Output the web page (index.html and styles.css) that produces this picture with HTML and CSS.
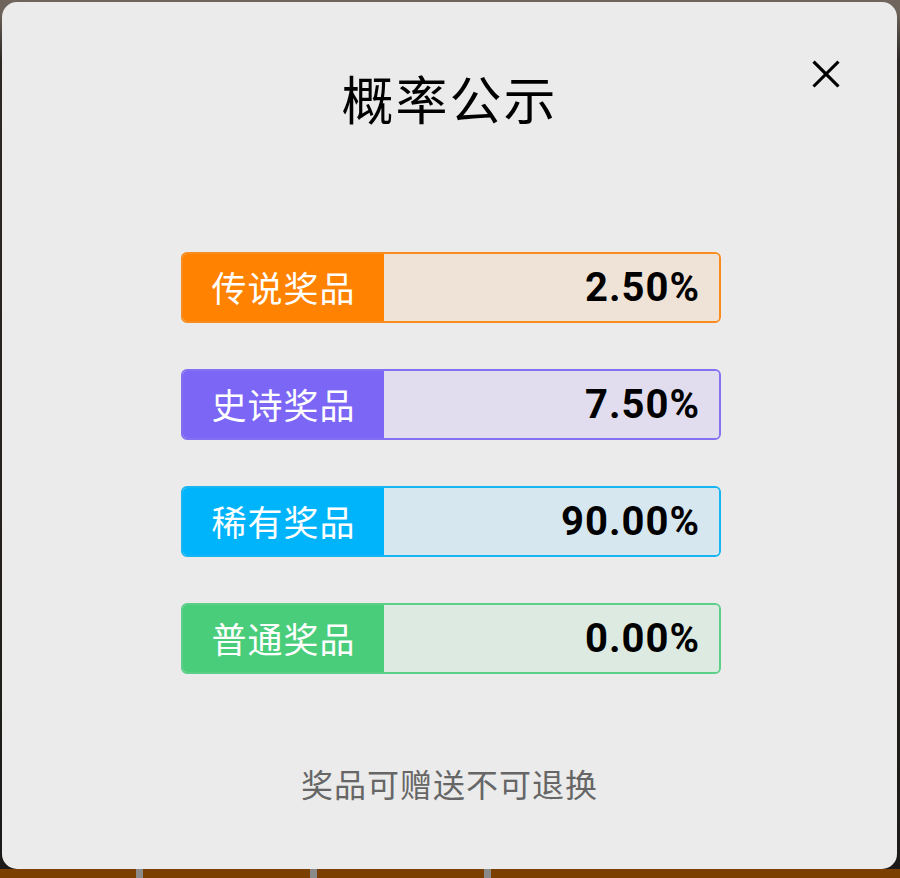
FILE: index.html
```html
<!DOCTYPE html>
<html lang="zh">
<head>
<meta charset="utf-8">
<title>概率公示</title>
<link rel="stylesheet" href="styles.css">
</head>
<body>
<div class="backdrop">
  <div class="dialog">
    <h1 class="title">概率公示</h1>
    <button class="close" aria-label="关闭">
      <svg viewBox="0 0 32 32" width="32" height="32"><path d="M3 3L29 29M29 3L3 29" stroke="#000" stroke-width="3.6" stroke-linecap="square" fill="none"/></svg>
    </button>
    <div class="list">
      <div class="row legend"><div class="label">传说奖品</div><div class="value">2.50%</div></div>
      <div class="row epic"><div class="label">史诗奖品</div><div class="value">7.50%</div></div>
      <div class="row rare"><div class="label">稀有奖品</div><div class="value">90.00%</div></div>
      <div class="row common"><div class="label">普通奖品</div><div class="value">0.00%</div></div>
    </div>
    <p class="note">奖品可赠送不可退换</p>
  </div>
  <div class="floor">
    <span class="post p1"></span><span class="post p2"></span><span class="post p3"></span>
  </div>
</div>
</body>
</html>
```
FILE: styles.css
```css
html, body {
  margin: 0;
  padding: 0;
}
body {
  width: 900px;
  height: 878px;
  overflow: hidden;
  background: #2a2622;
  font-family: "Noto Sans CJK SC", "Noto Sans", sans-serif;
}
.backdrop {
  position: relative;
  width: 900px;
  height: 878px;
  background: linear-gradient(#6f655c 0, #6f655c 10px, #2c2824 60px, #1c1a18 100%);
}
.dialog {
  position: absolute;
  left: 2px;
  top: 2px;
  width: 895px;
  height: 867px;
  background: #ebebeb;
  border-radius: 15px;
  box-sizing: border-box;
  padding-top: 63px;
  z-index: 2;
}
.floor {
  position: absolute;
  left: 0;
  right: 0;
  bottom: 0;
  height: 9px;
  background: #7c3f02;
  z-index: 1;
}
.post {
  position: absolute;
  bottom: 0;
  width: 7px;
  height: 12px;
  background: #8a8a8a;
}
.p1 { left: 136px; }
.p2 { left: 310px; }
.p3 { left: 484px; }
.title {
  margin: 0;
  height: 65px;
  line-height: 65px;
  text-align: center;
  font-size: 52px;
  font-weight: 400;
  color: #000;
  letter-spacing: 2px;
}
.close {
  position: absolute;
  left: 808px;
  top: 56px;
  width: 32px;
  height: 32px;
  padding: 0;
  border: 0;
  background: none;
}
.close svg { display: block; width: 28px; height: 28px; margin: 2px; }
.list {
  margin: 122px 0 0 179px;
  width: 540px;
  display: flex;
  flex-direction: column;
  gap: 46px;
}
.row {
  display: flex;
  height: 71px;
  box-sizing: border-box;
  border: 2px solid;
  border-radius: 6px;
  overflow: hidden;
}
.label {
  width: 201px;
  flex: none;
  display: flex;
  align-items: center;
  justify-content: center;
  color: #fff;
  font-size: 35px;
  letter-spacing: 1px;
  padding-bottom: 2px;
  box-sizing: border-box;
}
.value {
  flex: 1;
  display: flex;
  align-items: center;
  justify-content: flex-end;
  padding-right: 19px;
  font-family: Roboto, "Liberation Sans", sans-serif;
  font-weight: 700;
  font-size: 40px;
  letter-spacing: 1px;
  color: #000;
}
.legend { border-color: #fa8c1e; }
.legend .label { background: #ff8200; }
.legend .value { background: #efe2d6; }
.epic { border-color: #8470f2; }
.epic .label { background: #7b66f5; }
.epic .value { background: #e1ddef; }
.rare { border-color: #17b5f2; }
.rare .label { background: #00b4fb; }
.rare .value { background: #d6e7ef; }
.common { border-color: #5cd088; }
.common .label { background: #4acd7b; }
.common .value { background: #dceae1; }
.note {
  margin: 87px 0 0;
  height: 44px;
  line-height: 44px;
  text-align: center;
  font-size: 32px;
  color: #666;
  letter-spacing: 1px;
}
```
